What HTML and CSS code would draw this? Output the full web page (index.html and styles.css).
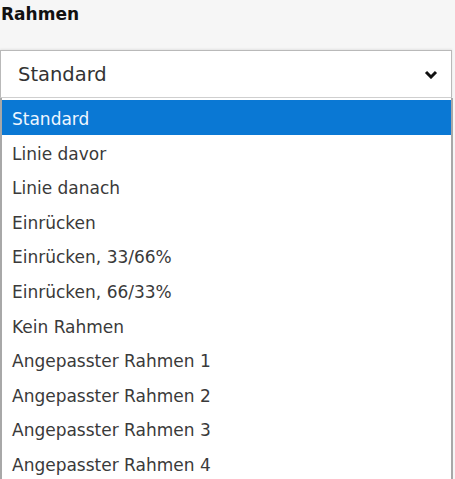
FILE: index.html
```html
<!DOCTYPE html>
<html lang="de">
<head>
    <meta charset="UTF-8">
    <title>Rahmen</title>
    <link rel="stylesheet" href="styles.css">
</head>
<body>
    <div class="field">
        <div class="field-label">Rahmen</div>
        <div class="select">
            <span class="select-value">Standard</span>
            <svg class="chevron" width="14" height="9" viewBox="0 0 14 9">
                <path d="M2 2 L7 7 L12 2" fill="none" stroke="#111" stroke-width="3"/>
            </svg>
        </div>
        <ul class="options">
            <li class="option selected">Standard</li>
            <li class="option">Linie davor</li>
            <li class="option">Linie danach</li>
            <li class="option">Einrücken</li>
            <li class="option">Einrücken, 33/66%</li>
            <li class="option">Einrücken, 66/33%</li>
            <li class="option">Kein Rahmen</li>
            <li class="option">Angepasster Rahmen 1</li>
            <li class="option">Angepasster Rahmen 2</li>
            <li class="option">Angepasster Rahmen 3</li>
            <li class="option">Angepasster Rahmen 4</li>
        </ul>
    </div>
</body>
</html>
```

FILE: styles.css
```css
body {
    margin: 0;
    background-color: #f6f6f6;
    font-family: "DejaVu Sans", Verdana, sans-serif;
    overflow: hidden;
}
.field {
    width: 453px;
}
.field-label {
    font-weight: bold;
    font-size: 17px;
    color: #111;
    padding: 4px 0 0 1px;
    height: 46px;
    box-sizing: border-box;
}
.select {
    display: flex;
    align-items: center;
    justify-content: space-between;
    height: 48px;
    box-sizing: border-box;
    background-color: #fff;
    border: 1px solid #b9b9b9;
    border-bottom-color: #cfcfcf;
    margin: 4px 1px 0 0;
    padding: 0 13px 0 17px;
    box-shadow: 0 -1px 2px rgba(0, 0, 0, 0.08);
}
.select-value {
    font-size: 19.5px;
    color: #333;
}
.options {
    list-style: none;
    margin: 0;
    padding: 2px 0 0 0;
    background-color: #fff;
    border-left: 2px solid #a8a8a8;
    border-right: 2px solid #a8a8a8;
}
.option {
    box-sizing: border-box;
    height: 34.6px;
    line-height: 34.6px;
    padding: 2px 0 0 10px;
    font-size: 17px;
    color: #3a3a3a;
}
.option.selected {
    background-color: #0a78d4;
    color: #eef6ff;
}
```
